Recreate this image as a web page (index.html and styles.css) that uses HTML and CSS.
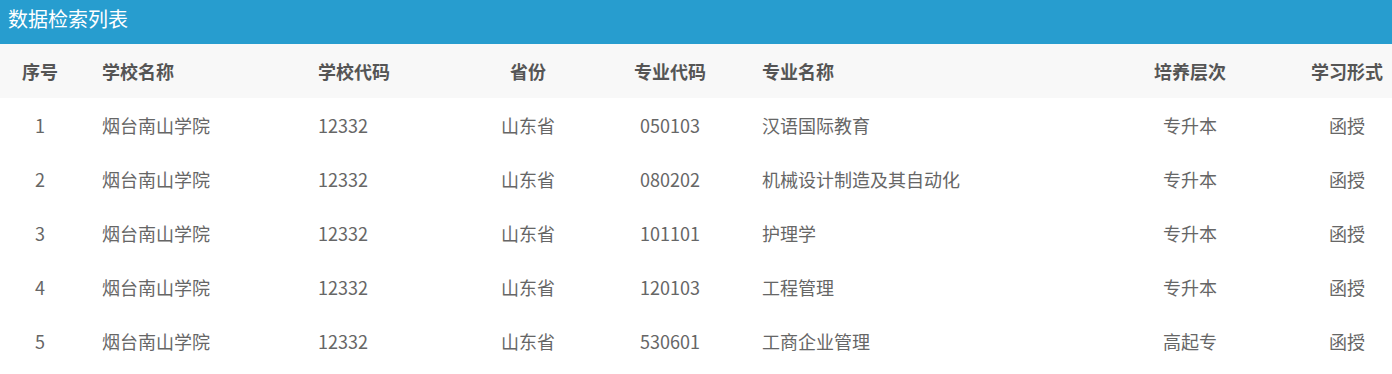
FILE: index.html
```html
<!DOCTYPE html>
<html lang="zh-CN">
<head>
<meta charset="utf-8">
<title>数据检索列表</title>
<link rel="stylesheet" href="styles.css">
</head>
<body>
<div class="panel">
  <div class="panel-title">数据检索列表</div>
  <table class="data-table">
    <colgroup>
      <col class="c1"><col class="c2"><col class="c3"><col class="c4">
      <col class="c5"><col class="c6"><col class="c7"><col class="c8">
    </colgroup>
    <thead>
      <tr>
        <th class="center">序号</th>
        <th class="left">学校名称</th>
        <th class="left">学校代码</th>
        <th class="center">省份</th>
        <th class="center">专业代码</th>
        <th class="left">专业名称</th>
        <th class="center">培养层次</th>
        <th class="center">学习形式</th>
      </tr>
    </thead>
    <tbody>
      <tr><td class="center">1</td><td class="left">烟台南山学院</td><td class="left">12332</td><td class="center">山东省</td><td class="center">050103</td><td class="left">汉语国际教育</td><td class="center">专升本</td><td class="center">函授</td></tr>
      <tr><td class="center">2</td><td class="left">烟台南山学院</td><td class="left">12332</td><td class="center">山东省</td><td class="center">080202</td><td class="left">机械设计制造及其自动化</td><td class="center">专升本</td><td class="center">函授</td></tr>
      <tr><td class="center">3</td><td class="left">烟台南山学院</td><td class="left">12332</td><td class="center">山东省</td><td class="center">101101</td><td class="left">护理学</td><td class="center">专升本</td><td class="center">函授</td></tr>
      <tr><td class="center">4</td><td class="left">烟台南山学院</td><td class="left">12332</td><td class="center">山东省</td><td class="center">120103</td><td class="left">工程管理</td><td class="center">专升本</td><td class="center">函授</td></tr>
      <tr><td class="center">5</td><td class="left">烟台南山学院</td><td class="left">12332</td><td class="center">山东省</td><td class="center">530601</td><td class="left">工商企业管理</td><td class="center">高起专</td><td class="center">函授</td></tr>
    </tbody>
  </table>
</div>
</body>
</html>
```

FILE: styles.css
```css
html, body {
  margin: 0;
  padding: 0;
  background: #ffffff;
}
body {
  font-family: "Noto Sans CJK SC", "Noto Sans", sans-serif;
}
.panel {
  width: 1392px;
}
.panel-title {
  height: 44px;
  line-height: 38px;
  padding-left: 8px;
  background: #279dcf;
  color: #ffffff;
  font-size: 20px;
  box-sizing: border-box;
}
.data-table {
  width: 1392px;
  table-layout: fixed;
  border-collapse: collapse;
  border-spacing: 0;
}
.c1 { width: 80px; }
.c2 { width: 216px; }
.c3 { width: 160px; }
.c4 { width: 144px; }
.c5 { width: 140px; }
.c6 { width: 338px; }
.c7 { width: 224px; }
.c8 { width: 90px; }
.data-table th,
.data-table td {
  height: 54px;
  padding: 0;
  font-size: 18px;
  line-height: 24px;
  vertical-align: middle;
  white-space: nowrap;
}
.data-table thead tr {
  background: #f8f8f8;
}
.data-table th {
  color: #555555;
  font-weight: bold;
}
.data-table td {
  color: #666666;
  font-weight: normal;
}
.data-table .left {
  text-align: left;
  padding-left: 22px;
}
.data-table .center {
  text-align: center;
}
```
